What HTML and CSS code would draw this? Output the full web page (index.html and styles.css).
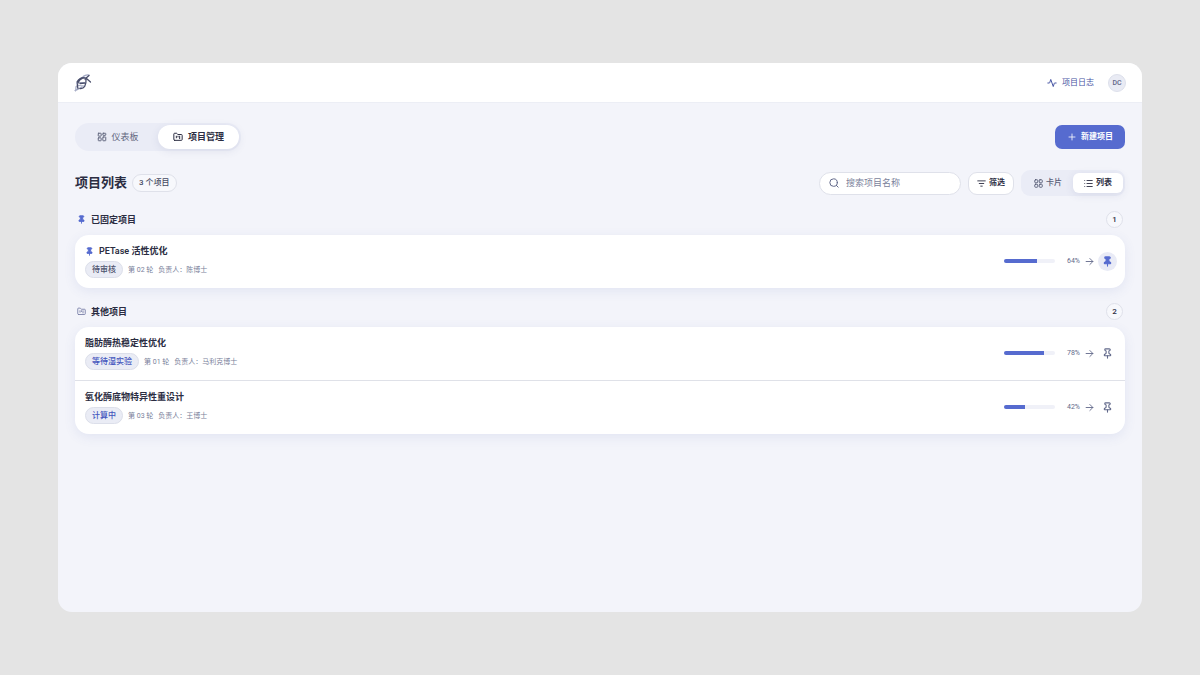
FILE: index.html
```html
<!DOCTYPE html>
<html lang="zh-CN">
<head>
<meta charset="utf-8">
<meta name="viewport" content="width=device-width, initial-scale=1">
<title>项目管理</title>
<link rel="stylesheet" href="styles.css">
</head>
<body>
<svg class="sprite" aria-hidden="true">
  <symbol id="pin" viewBox="0 0 24 24"><path d="M12 17v5"/><path d="M9 10.760a2 2 0 0 1-1.110 1.790l-1.780.9A2 2 0 0 0 5 15.240V16a1 1 0 0 0 1 1h12a1 1 0 0 0 1-1v-.760a2 2 0 0 0-1.110-1.790l-1.780-.9A2 2 0 0 1 15 10.760V7a1 1 0 0 1 1-1 2 2 0 0 0 0-4H8a2 2 0 0 0 0 4 1 1 0 0 1 1 1z"/></symbol>
  <symbol id="folder" viewBox="0 0 24 24"><path d="M4 20h16a2 2 0 0 0 2-2V8a2 2 0 0 0-2-2h-7.900a2 2 0 0 1-1.700-.9l-.8-1.200A2 2 0 0 0 7.900 3H4a2 2 0 0 0-2 2v13a2 2 0 0 0 2 2Z"/><path d="M8 10v4M12 10v2M16 10v6"/></symbol>
  <symbol id="arrow" viewBox="0 0 24 24"><path d="M3 12h18M13 4l8 8-8 8"/></symbol>
</svg>
<div class="app">
  <header class="topbar">
    <svg class="logo" viewBox="0 0 18 18" aria-hidden="true">
      <path class="logo-light" d="M1 16.500C3 16 5.500 14.500 8 13M2 12.500c0 2 0 3-.5 4.500M9 2.500c2-1.500 4-2 6-1.500M2.500 10c2-5 5-7 9-6.500M4.500 8.500l7 .5M4 11.500l6 .5"/>
      <path class="logo-dark" d="M3 8c3-4.500 6-5 9-3.500M4 14.500c-2-4 .5-8.500 5-10.500M6 14.500c4 .5 6.500-3 6-9.500M6 9.500l4.500-.5M11 5l4-3.500M12.500 4.500l4 3.500"/>
    </svg>
    <div class="topbar-right">
      <a class="log-link" href="#log"><svg class="icon i-10" viewBox="0 0 24 24" aria-hidden="true"><path d="M22 12h-3.500a1 1 0 0 0-1 .8L15 20.500 9 3.500 6.500 11.200a1 1 0 0 1-1 .8H2"/></svg>项目日志</a>
      <button class="avatar" type="button">DC</button>
    </div>
  </header>
  <main class="main">
    <div class="row">
      <nav class="tabs">
        <button class="tab" type="button"><svg class="icon i-10" viewBox="0 0 24 24" aria-hidden="true"><rect x="3" y="3" width="7" height="7" rx="1"/><rect x="14" y="3" width="7" height="5" rx="1"/><rect x="14" y="12" width="7" height="9" rx="1"/><rect x="3" y="14" width="7" height="7" rx="1"/></svg>仪表板</button>
        <button class="tab tab-active" type="button"><svg class="icon i-10" aria-hidden="true"><use href="#folder"/></svg>项目管理</button>
      </nav>
      <button class="create" type="button"><svg class="icon i-8" viewBox="0 0 24 24" aria-hidden="true"><path d="M12 3v18M3 12h18"/></svg>新建项目</button>
    </div>
    <div class="row toolbar">
      <div class="heading"><h1>项目列表</h1><span class="total">3 个项目</span></div>
      <div class="tools">
        <label class="search"><svg class="icon i-10" viewBox="0 0 24 24" aria-hidden="true"><circle cx="11" cy="11" r="9"/><path d="m17.500 17.500 4.500 4.500"/></svg><input type="search" placeholder="搜索项目名称" aria-label="搜索项目名称"></label>
        <button class="filter" type="button"><svg class="icon i-9" viewBox="0 0 24 24" aria-hidden="true"><path d="M2 5h20M6 12h12M10 19h4"/></svg>筛选</button>
        <div class="views">
          <button class="view" type="button"><svg class="icon i-9" viewBox="0 0 24 24" aria-hidden="true"><rect x="2" y="2" width="8" height="8" rx="2"/><rect x="14" y="2" width="8" height="8" rx="2"/><rect x="2" y="14" width="8" height="8" rx="2"/><rect x="14" y="14" width="8" height="8" rx="2"/></svg>卡片</button>
          <button class="view view-active" type="button"><svg class="icon i-9" viewBox="0 0 24 24" aria-hidden="true"><path d="M8 4h14M8 12h14M8 20h14M2 4h.01M2 12h.01M2 20h.01"/></svg>列表</button>
        </div>
      </div>
    </div>
    <section class="group">
      <div class="group-head"><h2><svg class="icon i-9 pinned" aria-hidden="true"><use href="#pin"/></svg>已固定项目</h2><span class="count">1</span></div>
      <ul class="list">
        <li class="item">
          <div class="info">
            <h3><svg class="icon i-9 pinned" aria-hidden="true"><use href="#pin"/></svg>PETase 活性优化</h3>
            <div class="meta"><span class="tag tag-muted">待审核</span><span>第 02 轮</span><span>负责人：陈博士</span></div>
          </div>
          <div class="status">
            <div class="bar"><div class="fill" style="width:64%"></div></div><span class="pct">64%</span>
            <svg class="icon i-9" aria-hidden="true"><use href="#arrow"/></svg>
            <button class="pin-btn pin-on" type="button" aria-label="取消固定"><svg class="icon i-11 pinned" aria-hidden="true"><use href="#pin"/></svg></button>
          </div>
        </li>
      </ul>
    </section>
    <section class="group">
      <div class="group-head"><h2><svg class="icon i-9 folder" aria-hidden="true"><use href="#folder"/></svg>其他项目</h2><span class="count">2</span></div>
      <ul class="list">
        <li class="item">
          <div class="info">
            <h3>脂肪酶热稳定性优化</h3>
            <div class="meta"><span class="tag">等待湿实验</span><span>第 01 轮</span><span>负责人：马利克博士</span></div>
          </div>
          <div class="status">
            <div class="bar"><div class="fill" style="width:78%"></div></div><span class="pct">78%</span>
            <svg class="icon i-9" aria-hidden="true"><use href="#arrow"/></svg>
            <button class="pin-btn" type="button" aria-label="固定"><svg class="icon i-11" aria-hidden="true"><use href="#pin"/></svg></button>
          </div>
        </li>
        <li class="item">
          <div class="info">
            <h3>氧化酶底物特异性重设计</h3>
            <div class="meta"><span class="tag">计算中</span><span>第 03 轮</span><span>负责人：王博士</span></div>
          </div>
          <div class="status">
            <div class="bar"><div class="fill" style="width:42%"></div></div><span class="pct">42%</span>
            <svg class="icon i-9" aria-hidden="true"><use href="#arrow"/></svg>
            <button class="pin-btn" type="button" aria-label="固定"><svg class="icon i-11" aria-hidden="true"><use href="#pin"/></svg></button>
          </div>
        </li>
      </ul>
    </section>
  </main>
</div>
</body>
</html>
```
FILE: styles.css
```css
* { box-sizing: border-box; }
body { margin: 0; padding: 63px 58px; min-height: 100vh; display: flex; background: #e4e4e4; color: #2b2d42; font-family: Roboto, "Noto Sans CJK SC", sans-serif; font-size: 8px; line-height: 12px; }
button, input { font: inherit; color: inherit; margin: 0; padding: 0; border: 0; background: none; }
button { cursor: pointer; }
h1, h2, h3, ul { margin: 0; padding: 0; }
ul { list-style: none; }
.sprite { position: absolute; width: 0; height: 0; }
.icon { flex: none; fill: none; stroke: currentColor; stroke-width: 2.4; stroke-linecap: round; stroke-linejoin: round; }
.i-8 { width: 8px; height: 8px; }
.i-9 { width: 9px; height: 9px; }
.i-10 { width: 10px; height: 10px; }
.i-11 { width: 11px; height: 11px; }
.app { flex: 1; min-width: 0; background: #f3f4fa; border-radius: 14px; overflow: hidden; }
.topbar { display: flex; align-items: center; justify-content: space-between; height: 40px; padding: 0 16px; background: #fff; border-bottom: 1px solid #eceef5; }
.logo { width: 18px; height: 18px; fill: none; stroke-linecap: round; }
.logo-light { stroke: #a3a9c4; stroke-width: 1.2; }
.logo-dark { stroke: #4a4f6c; stroke-width: 1.3; }
.topbar-right { display: flex; align-items: center; gap: 14px; }
.log-link { display: flex; align-items: center; gap: 5px; color: #4654a3; text-decoration: none; font-weight: 400; }
.avatar { width: 18px; height: 18px; border: 1px solid #dcdfea; border-radius: 50%; background: #e9ebf4; color: #5f6687; font-size: 7px; font-weight: 500; }
.main { padding: 20px 17px; }
.row { display: flex; align-items: center; justify-content: space-between; }
.tabs { display: grid; grid-template-columns: 1fr 1fr; padding: 2px; border-radius: 14px; background: #eaecf6; }
.tab { display: flex; align-items: center; justify-content: center; gap: 5px; height: 24px; padding: 0 15px; border-radius: 12px; font-size: 9px; color: #62677f; }
.tab-active { background: #fff; color: #2b2d42; font-weight: 600; box-shadow: 0 2px 8px rgba(60, 70, 130, .1); }
.create { display: flex; align-items: center; gap: 5px; height: 24px; padding: 0 12px 0 13px; border-radius: 7px; background: #566bcf; color: #fff; font-weight: 600; }
.toolbar { margin-top: 19px; }
.heading { display: flex; align-items: center; gap: 5px; }
h1 { font-size: 13px; line-height: 18px; font-weight: 600; }
.total { padding: 2px 6px; border: 1px solid #dfe1ea; border-radius: 9px; background: #f7f8fc; color: #454a62; font-weight: 500; }
.tools { display: flex; align-items: center; gap: 7px; }
.search { display: flex; align-items: center; gap: 7px; width: 142px; height: 23px; padding: 0 9px; border: 1px solid #dfe1ea; border-radius: 12px; background: #fff; color: #62698a; font-size: 9px; }
.search input { flex: 1; min-width: 0; outline: 0; appearance: none; }
.search input::placeholder { color: #7a7f9b; }
.filter { display: flex; align-items: center; gap: 3px; height: 23px; padding: 0 8px; border: 1px solid #dfe1ea; border-radius: 9px; background: #fff; font-weight: 600; }
.views { display: grid; grid-template-columns: 1fr 1fr; padding: 3px 2px; border-radius: 9px; background: #eaecf6; }
.view { display: flex; align-items: center; justify-content: center; gap: 3px; height: 20px; padding: 0 11px; border-radius: 6px; color: #565b75; font-weight: 500; }
.view-active { background: #fff; color: #2b2d42; font-weight: 600; box-shadow: 0 2px 8px rgba(60, 70, 130, .1); }
.group { margin-top: 15px; }
.group-head { display: flex; align-items: center; justify-content: space-between; padding: 0 2px; margin-bottom: 7px; }
h2 { display: flex; align-items: center; gap: 5px; font-size: 9px; line-height: 14px; font-weight: 600; }
.count { min-width: 17px; height: 17px; border: 1px solid #dfe1ea; border-radius: 9px; background: #f7f8fc; text-align: center; line-height: 15px; font-weight: 500; }
.pinned { color: #566bcf; fill: currentColor; }
.folder { color: #7a80a8; }
.list { border-radius: 14px; background: #fff; box-shadow: 0 3px 12px rgba(80, 95, 180, .1); }
.item { display: flex; align-items: center; justify-content: space-between; padding: 9px 8px 10px 10px; }
.item + .item { border-top: 1px solid #dfe1e8; }
h3 { display: flex; align-items: center; gap: 5px; font-size: 9px; line-height: 14px; font-weight: 600; }
.meta { display: flex; align-items: center; gap: 5px; margin-top: 3px; font-size: 7px; color: #7a7f9b; }
.tag { padding: 2px 6px; border: 1px solid #dcdfea; border-radius: 9px; background: #eaecf5; color: #4355bd; font-size: 8px; line-height: 11px; font-weight: 500; }
.tag-muted { color: #4e536e; }
.status { display: flex; align-items: center; color: #62698a; }
.bar { width: 51px; height: 4px; border-radius: 2px; background: #f0f1f8; overflow: hidden; }
.fill { height: 100%; background: #566bcf; }
.pct { width: 25px; margin-right: 5px; text-align: right; font-size: 7px; }
.pin-btn { display: flex; align-items: center; justify-content: center; width: 19px; height: 19px; margin-left: 4px; border-radius: 50%; }
.pin-on { background: #e9ebf6; }
```
